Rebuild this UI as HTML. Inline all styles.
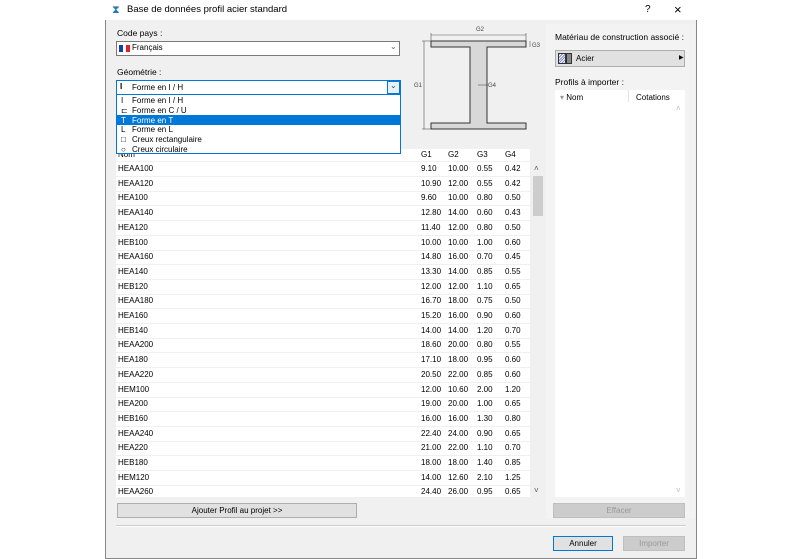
<!DOCTYPE html>
<html><head><meta charset="utf-8"><style>
*{margin:0;padding:0;box-sizing:border-box}
body{width:800px;height:559px;background:#fff;font-family:"Liberation Sans",sans-serif;font-size:8px;color:#000;position:relative;overflow:hidden}
.a{position:absolute}
#dlg{left:105px;top:0;width:592px;height:559px;border:1px solid #888;border-top:none;background:#f0f0f0}
#title{left:105px;top:0;width:592px;height:20px;background:#fff}
.combo{background:#fff;border:1px solid #7a7a7a}
.row{position:absolute;left:0;width:414px;height:15px;border-bottom:1px solid #f0f0f0;line-height:14px}
.row span{position:absolute}
.btn{background:#e1e1e1;border:1px solid #adadad;text-align:center;line-height:13px}
</style></head><body>
<div class="a" id="dlg"></div>
<div class="a" id="title"></div>
<div class="a" style="left:112px;top:4px;font-size:11px;color:#2a7ab8">⧗</div>
<div class="a" style="left:127px;top:4px;font-size:9.5px">Base de données profil acier standard</div>
<div class="a" style="left:645px;top:4px;font-size:10px">?</div>
<div class="a" style="left:674px;top:2px;font-size:13px">×</div>

<div class="a" style="left:117px;top:28px;font-size:8.5px">Code pays :</div>
<div class="a combo" style="left:116px;top:41px;width:284px;height:15px"></div>
<div class="a" style="left:119px;top:45px;width:4px;height:7px;background:#1a3ea8"></div>
<div class="a" style="left:123px;top:45px;width:3px;height:7px;background:#fff"></div>
<div class="a" style="left:126px;top:45px;width:4px;height:7px;background:#e0202a"></div>
<div class="a" style="left:132px;top:43px">Français</div>
<div class="a" style="left:390px;top:42px;color:#666">⌄</div>

<div class="a" style="left:117px;top:67px;font-size:8.5px">Géométrie :</div>
<div class="a" style="left:116px;top:80px;width:285px;height:15px;background:#fff;border:1px solid #0078d7"></div>
<div class="a" style="left:387px;top:81px;width:13px;height:13px;background:#e5f1fb;border:1px solid #0078d7"></div>
<div class="a" style="left:390px;top:81px;color:#444">⌄</div>
<div class="a" style="left:120px;top:82px;font-weight:bold">I</div>
<div class="a" style="left:132px;top:83px">Forme en I / H</div>

<div class="a" style="left:116px;top:94px;width:285px;height:60px;background:#fff;border:1px solid #0078d7;z-index:5">
 <div class="a" style="left:0;top:20px;width:283px;height:10px;background:#0078d7"></div>
 <div class="a" style="left:4px;top:1px;line-height:9.8px">I<br>⊏<br><span style="color:#fff">T</span><br>L<br>□<br>○</div>
 <div class="a" style="left:15px;top:1px;line-height:9.8px">Forme en I / H<br>Forme en C / U<br><span style="color:#fff">Forme en T</span><br>Forme en L<br>Creux rectangulaire<br>Creux circulaire</div>
</div>

<!-- diagram -->
<svg class="a" style="left:410px;top:20px" width="135" height="115">
 <g fill="#d8d8d8" stroke="#333" stroke-width="1">
  <path d="M21 21H116V27H77V103H116V109H21V103H60V27H21Z"/>
 </g>
 <g stroke="#555" stroke-width=".6" fill="none">
  <line x1="21" y1="15" x2="116" y2="15"/><line x1="21" y1="13" x2="21" y2="21"/><line x1="116" y1="13" x2="116" y2="21"/>
  <line x1="14" y1="21" x2="14" y2="109"/><line x1="12" y1="21" x2="21" y2="21"/><line x1="12" y1="109" x2="21" y2="109"/>
  <line x1="68" y1="65" x2="78" y2="65"/><line x1="120" y1="21" x2="120" y2="27"/>
 </g>
 <g font-size="6" fill="#444" font-family="Liberation Sans"><text x="66" y="11">G2</text><text x="122" y="27">G3</text><text x="4" y="67">G1</text><text x="78" y="67">G4</text></g>
</svg>

<!-- table -->
<div class="a" style="left:116px;top:149px;width:414px;height:348px;background:#fff;overflow:hidden">
 <div class="row" style="top:0;height:13px;line-height:12px"><span style="left:2px">Nom</span><span style="left:305px">G1</span><span style="left:332px">G2</span><span style="left:361px">G3</span><span style="left:389px">G4</span></div>
 <div id="rows"></div>
</div>
<div class="a" style="left:530px;top:162px;width:15px;height:335px;background:#f0f0f0"></div>
<div class="a" style="left:534px;top:164px;color:#555">˄</div>
<div class="a" style="left:533px;top:176px;width:10px;height:40px;background:#cdcdcd"></div>
<div class="a" style="left:534px;top:486px;color:#555">˅</div>

<div class="a btn" style="left:117px;top:503px;width:240px;height:15px">Ajouter Profil au projet &gt;&gt;</div>
<div class="a" style="left:116px;top:525px;width:570px;height:2px;border-top:1px solid #ccc;border-bottom:1px solid #fff"></div>
<div class="a btn" style="left:553px;top:536px;width:60px;height:15px;border-color:#0078d7">Annuler</div>
<div class="a btn" style="left:623px;top:536px;width:62px;height:15px;color:#999;background:#ccc;border-color:#bfbfbf">Importer</div>

<!-- right panel -->
<div class="a" style="left:546px;top:24px;width:149px;height:494px;background:#f3f3f3"></div>
<div class="a" style="left:555px;top:32px;font-size:8.5px">Matériau de construction associé :</div>
<div class="a btn" style="left:555px;top:50px;width:130px;height:17px;text-align:left"></div>
<div class="a" style="left:558px;top:53px;width:8px;height:11px;border:1px solid #333;background:repeating-linear-gradient(135deg,#7d8bd0 0 1px,#fff 1px 2px)"></div>
<div class="a" style="left:566px;top:53px;width:6px;height:11px;border:1px solid #333;background:#888"></div>
<div class="a" style="left:576px;top:54px">Acier</div>
<div class="a" style="left:679px;top:54px;font-size:6px">▶</div>
<div class="a" style="left:555px;top:77px;font-size:8.5px">Profils à importer :</div>
<div class="a" style="left:555px;top:90px;width:130px;height:407px;background:#fff"></div>
<div class="a" style="left:560px;top:93px"><span style="color:#999">▾</span> Nom</div>
<div class="a" style="left:628px;top:90px;width:1px;height:12px;background:#e5e5e5"></div>
<div class="a" style="left:636px;top:93px">Cotations</div>
<div class="a" style="left:676px;top:104px;color:#bbb">˄</div>
<div class="a" style="left:676px;top:486px;color:#bbb">˅</div>
<div class="a btn" style="left:553px;top:503px;width:132px;height:15px;color:#999;background:#ccc;border-color:#bfbfbf">Effacer</div>

<script>
var d=[["HEAA100","9.10","10.00","0.55","0.42"],["HEAA120","10.90","12.00","0.55","0.42"],["HEA100","9.60","10.00","0.80","0.50"],["HEAA140","12.80","14.00","0.60","0.43"],["HEA120","11.40","12.00","0.80","0.50"],["HEB100","10.00","10.00","1.00","0.60"],["HEAA160","14.80","16.00","0.70","0.45"],["HEA140","13.30","14.00","0.85","0.55"],["HEB120","12.00","12.00","1.10","0.65"],["HEAA180","16.70","18.00","0.75","0.50"],["HEA160","15.20","16.00","0.90","0.60"],["HEB140","14.00","14.00","1.20","0.70"],["HEAA200","18.60","20.00","0.80","0.55"],["HEA180","17.10","18.00","0.95","0.60"],["HEAA220","20.50","22.00","0.85","0.60"],["HEM100","12.00","10.60","2.00","1.20"],["HEA200","19.00","20.00","1.00","0.65"],["HEB160","16.00","16.00","1.30","0.80"],["HEAA240","22.40","24.00","0.90","0.65"],["HEA220","21.00","22.00","1.10","0.70"],["HEB180","18.00","18.00","1.40","0.85"],["HEM120","14.00","12.60","2.10","1.25"],["HEAA260","24.40","26.00","0.95","0.65"]];
var h="";d.forEach(function(r,i){h+='<div class="row" style="top:'+(13+i*14.7)+'px"><span style="left:2px">'+r[0]+'</span><span style="left:305px">'+r[1]+'</span><span style="left:332px">'+r[2]+'</span><span style="left:361px">'+r[3]+'</span><span style="left:389px">'+r[4]+'</span></div>'});
document.getElementById("rows").innerHTML=h;
</script>
</body></html>
